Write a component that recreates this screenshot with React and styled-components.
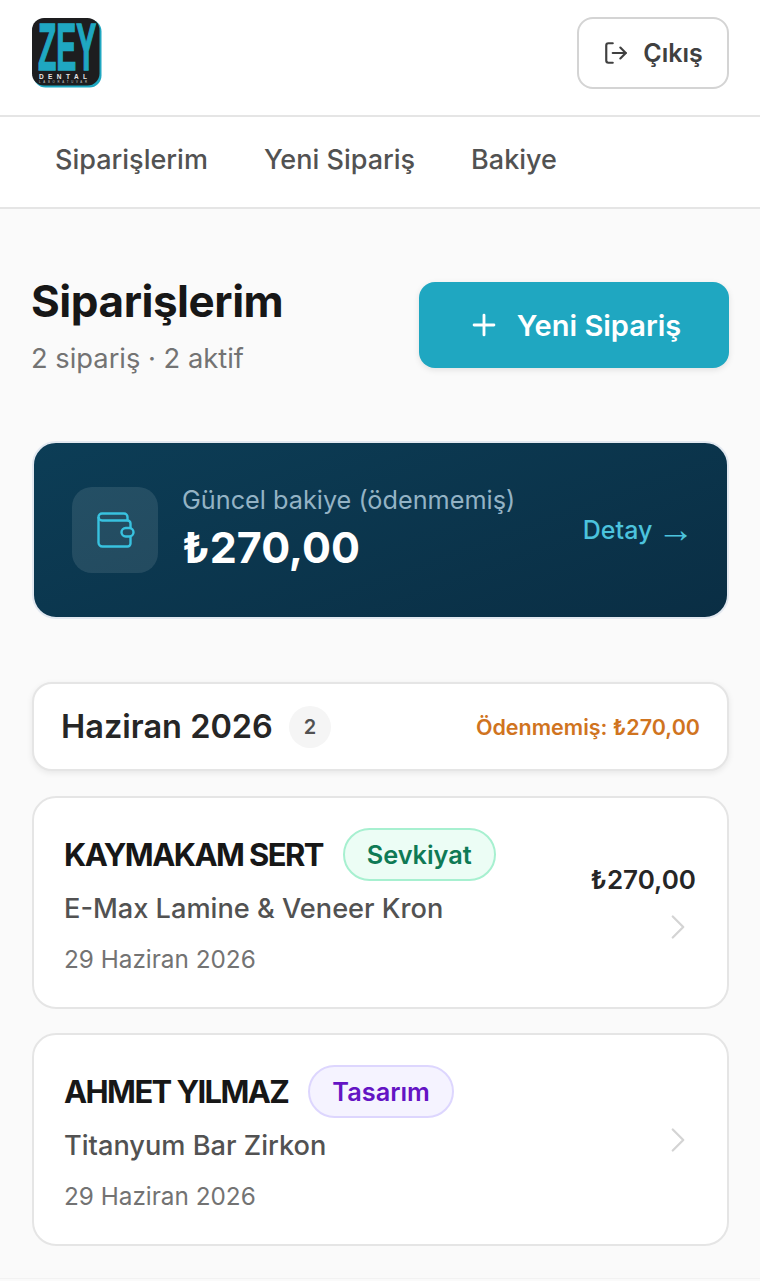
// App.jsx

import styled, { createGlobalStyle } from "styled-components";
import { LogOut, Plus, ChevronRight } from "lucide-react";

const COLORS = {
    ink: "#171717",
    body: "#525252",
    muted: "#737373",
    line: "#e5e5e5",
    teal: "#1fa7c1",
};

const HEADING = `"Inter", "Liberation Sans", sans-serif`;

const tabs = ["Siparişlerim", "Yeni Sipariş", "Bakiye"];

const orders = [
    {
        name: "KAYMAKAM SERT",
        status: "Sevkiyat",
        tone: "green",
        product: "E-Max Lamine & Veneer Kron",
        date: "29 Haziran 2026",
        price: "₺270,00",
    },
    {
        name: "AHMET YILMAZ",
        status: "Tasarım",
        tone: "purple",
        product: "Titanyum Bar Zirkon",
        date: "29 Haziran 2026",
    },
];

const Logo = () => (
    <LogoMark viewBox="0 0 70 70" aria-label="Zey Dental">
        <rect x="1.5" y="1.5" width="68" height="68" rx="12" fill="#1fa7c1" />
        <rect width="67.5" height="67.5" rx="12" fill="#1d1d1f" />
        <text transform="translate(6 52) scale(1 2.25)" fontFamily="Liberation Sans" fontWeight="700"
            fontSize="30" stroke="#1fa7c1" strokeWidth="0.7" fill="#1fa7c1">ZEY</text>
        <text x="7" y="61" textLength="48" lengthAdjust="spacing"
            fontFamily="Liberation Sans" fontWeight="700" fontSize="6.5" fill="#e8e8e8">DENTAL</text>
        <text x="7" y="65.4" textLength="48" lengthAdjust="spacing"
            fontFamily="Liberation Sans" fontSize="2.8" fill="#c8c8c8">LABORATUVAR</text>
    </LogoMark>
);

// lucide's wallet has another shape, this one has the clasp on the side
const WalletIcon = () => (
    <WalletSvg width="38" height="36" viewBox="0 0 38 36" fill="none" stroke="currentColor" strokeWidth="2.4" strokeLinejoin="round">
        <path d="M5 1.5h22a3.5 3.5 0 0 1 3.5 3.5v3.5H5a3.5 3.5 0 0 1-3.5-3.5a3.5 3.5 0 0 1 3.5-3.5z" />
        <path d="M1.5 5v25.5a4 4 0 0 0 4 4h25a3 3 0 0 0 3-3v-7M33.5 16v-4.5a3 3 0 0 0-3-3" />
        <rect x="24.5" y="16" width="12" height="8.5" rx="4.2" />
    </WalletSvg>
);

const App = () => {
    return (
        <Page>
            <GlobalStyle />
            <Header>
                <Logo />
                <LogoutButton>
                    <LogOut size={26} strokeWidth={2} />
                    Çıkış
                </LogoutButton>
            </Header>
            <Nav>
                {tabs.map(tab => <NavItem key={tab}>{tab}</NavItem>)}
            </Nav>
            <Main>
                <TitleRow>
                    <div>
                        <Title>Siparişlerim</Title>
                        <Subtitle>2 sipariş · 2 aktif</Subtitle>
                    </div>
                    <NewOrderButton>
                        <Plus size={34} strokeWidth={2} />
                        Yeni Sipariş
                    </NewOrderButton>
                </TitleRow>
                <BalanceCard>
                    <BalanceIcon>
                        <WalletIcon />
                    </BalanceIcon>
                    <BalanceInfo>
                        <BalanceLabel>Güncel bakiye (ödenmemiş)</BalanceLabel>
                        <BalanceAmount>₺270,00</BalanceAmount>
                    </BalanceInfo>
                    <BalanceLink>Detay <Arrow>→</Arrow></BalanceLink>
                </BalanceCard>
                <MonthBar>
                    <MonthName>Haziran 2026</MonthName>
                    <MonthCount>2</MonthCount>
                    <MonthDue>Ödenmemiş: ₺270,00</MonthDue>
                </MonthBar>
                <OrderList>
                    {orders.map(order => (
                        <OrderCard key={order.name}>
                            <OrderInfo>
                                <OrderTop>
                                    <OrderName>{order.name}</OrderName>
                                    <StatusBadge $tone={order.tone}>{order.status}</StatusBadge>
                                </OrderTop>
                                <OrderProduct>{order.product}</OrderProduct>
                                <OrderDate>{order.date}</OrderDate>
                            </OrderInfo>
                            <OrderSide>
                                {order.price && <OrderPrice>{order.price}</OrderPrice>}
                                <Chevron size={42} strokeWidth={1.3} />
                            </OrderSide>
                        </OrderCard>
                    ))}
                </OrderList>
                <Footer />
            </Main>
        </Page>
    );
};

const GlobalStyle = createGlobalStyle`
    html, body {
        margin: 0;
        background: #fafafa;
    }
    * {
        box-sizing: border-box;
    }
    body {
        font-family: "Inter", "Liberation Sans", sans-serif;
        color: ${COLORS.ink};
    }
`;

const Page = styled.div`
    width: 760px;
    height: 1281px;
    overflow: hidden;
    background: #fafafa;
`;

const Header = styled.header`
    height: 117px;
    padding: 0 31px 0 32px;
    display: flex;
    justify-content: space-between;
    align-items: center;
    background: #fff;
    border-bottom: 2px solid ${COLORS.line};
`;

const LogoMark = styled.svg`
    width: 70px;
    height: 70px;
    display: block;
    margin-top: -10px;
`;

const LogoutButton = styled.button`
    width: 152px;
    height: 72px;
    margin-top: -10px;
    display: flex;
    align-items: center;
    justify-content: center;
    gap: 14px;
    background: #fff;
    border: 2px solid #d4d4d4;
    border-radius: 16px;
    font: 600 25px ${HEADING};
    color: #404040;
`;

const Nav = styled.nav`
    height: 92px;
    padding: 0 27px 6px;
    display: flex;
    align-items: center;
    background: #fff;
    border-bottom: 2px solid ${COLORS.line};
`;

const NavItem = styled.span`
    padding: 0 28px;
    font-size: 27px;
    font-weight: 500;
    color: ${COLORS.body};
`;

const Main = styled.main`
    padding: 64px 31px 0 32px;
`;

const TitleRow = styled.section`
    display: flex;
    justify-content: space-between;
    align-items: flex-start;
`;

const Title = styled.h1`
    margin: 0 0 0 -1px;
    font: 700 44px/56px ${HEADING};
    letter-spacing: -0.45px;
    color: ${COLORS.ink};
`;

const Subtitle = styled.p`
    margin: 10px 0 0 -1px;
    font-size: 27.3px;
    line-height: 40px;
    color: ${COLORS.muted};
`;

const NewOrderButton = styled.button`
    width: 310px;
    height: 86px;
    margin-top: 9px;
    display: flex;
    align-items: center;
    justify-content: center;
    gap: 16px;
    border: 0;
    border-radius: 16px;
    background: ${COLORS.teal};
    box-shadow: 0 2px 6px rgba(0, 0, 0, 0.1);
    font: 600 29px ${HEADING};
    color: #fff;
`;

const BalanceCard = styled.section`
    height: 178px;
    margin-top: 62px;
    padding: 0 38px;
    display: flex;
    align-items: center;
    gap: 24px;
    border: 2px solid #e2e8f0;
    border-radius: 24px;
    background: linear-gradient(160deg, #0c3d56, #0a2e44);
`;

const BalanceIcon = styled.div`
    width: 86px;
    height: 86px;
    flex-shrink: 0;
    display: flex;
    align-items: center;
    justify-content: center;
    border-radius: 20px;
    background: rgba(255, 255, 255, 0.1);
    color: #38c2e0;
`;

const WalletSvg = styled.svg`
    margin-left: 2px;
`;

const BalanceInfo = styled.div`
    flex: 1;
    padding-bottom: 2px;
`;

const BalanceLabel = styled.div`
    margin-bottom: 2px;
    font-size: 25.25px;
    line-height: 34px;
    color: #94b3c5;
`;

const BalanceAmount = styled.div`
    font: 700 43px/56px ${HEADING};
    color: #fff;
`;

const BalanceLink = styled.span`
    flex-shrink: 0;
    white-space: nowrap;
    font-size: 25px;
    font-weight: 500;
    color: #4cc3dd;
`;

const Arrow = styled.span`
    margin: 0 -5px 0 -2px;
    font-family: "Liberation Sans", sans-serif;
    font-weight: 400;
    font-size: 37px;
    line-height: 0;
    vertical-align: -3px;
`;

const MonthBar = styled.section`
    height: 89px;
    margin-top: 63px;
    padding: 0 27px;
    display: flex;
    align-items: center;
    gap: 16px;
    background: #fff;
    border: 2px solid ${COLORS.line};
    border-radius: 20px;
    box-shadow: 0 2px 6px rgba(0, 0, 0, 0.08);
`;

const MonthName = styled.h2`
    margin: 0;
    font: 600 32.5px ${HEADING};
    color: #262626;
`;

const MonthCount = styled.span`
    width: 42px;
    height: 42px;
    display: flex;
    align-items: center;
    justify-content: center;
    border-radius: 50%;
    background: #f5f5f5;
    font-size: 20px;
    font-weight: 600;
    color: ${COLORS.body};
`;

const MonthDue = styled.span`
    margin-left: auto;
    font-size: 21.5px;
    font-weight: 600;
    color: #d0741f;
`;

const OrderList = styled.div`
    margin-top: 25px;
    display: flex;
    flex-direction: column;
    gap: 24px;
`;

const OrderCard = styled.article`
    height: 213px;
    padding: 30px 31px 30px 30px;
    display: flex;
    justify-content: space-between;
    background: #fff;
    border: 2px solid ${COLORS.line};
    border-radius: 24px;
`;

const OrderInfo = styled.div`
    display: flex;
    flex-direction: column;
`;

const OrderTop = styled.div`
    display: flex;
    align-items: center;
    gap: 20px;
`;

const OrderName = styled.h3`
    margin: 0;
    font: 700 31px ${HEADING};
    letter-spacing: -1.6px;
    color: ${COLORS.ink};
`;

const statusColors = {
    green: { bg: "#ecfdf5", border: "#a7f0d0", text: "#0f7a55" },
    purple: { bg: "#f5f3ff", border: "#ddd6fe", text: "#6414c4" },
};

const StatusBadge = styled.span`
    height: 53px;
    padding: 0 22px;
    display: flex;
    align-items: center;
    border-radius: 27px;
    font-size: 25.3px;
    font-weight: 600;
    background: ${p => statusColors[p.$tone].bg};
    border: 2px solid ${p => statusColors[p.$tone].border};
    color: ${p => statusColors[p.$tone].text};
`;

const OrderProduct = styled.p`
    margin: 8px 0 0;
    font-size: 27.2px;
    line-height: 40px;
    font-weight: 500;
    color: ${COLORS.body};
`;

const OrderDate = styled.p`
    margin: 12px 0 0;
    font-size: 24.3px;
    line-height: 36px;
    color: ${COLORS.muted};
`;

const OrderSide = styled.div`
    flex: 1;
    display: flex;
    flex-direction: column;
    align-items: flex-end;
    justify-content: center;
    gap: 4px;
`;

const OrderPrice = styled.div`
    font: 600 26px/44px ${HEADING};
    color: #262626;
`;

const Chevron = styled(ChevronRight)`
    color: #d4d4d4;
    margin-right: -3px;
`;

const Footer = styled.footer`
    margin-top: 32px;
    margin-left: -32px;
    width: 760px;
    border-top: 1px solid #f2f2f2;
`;

export default App;
